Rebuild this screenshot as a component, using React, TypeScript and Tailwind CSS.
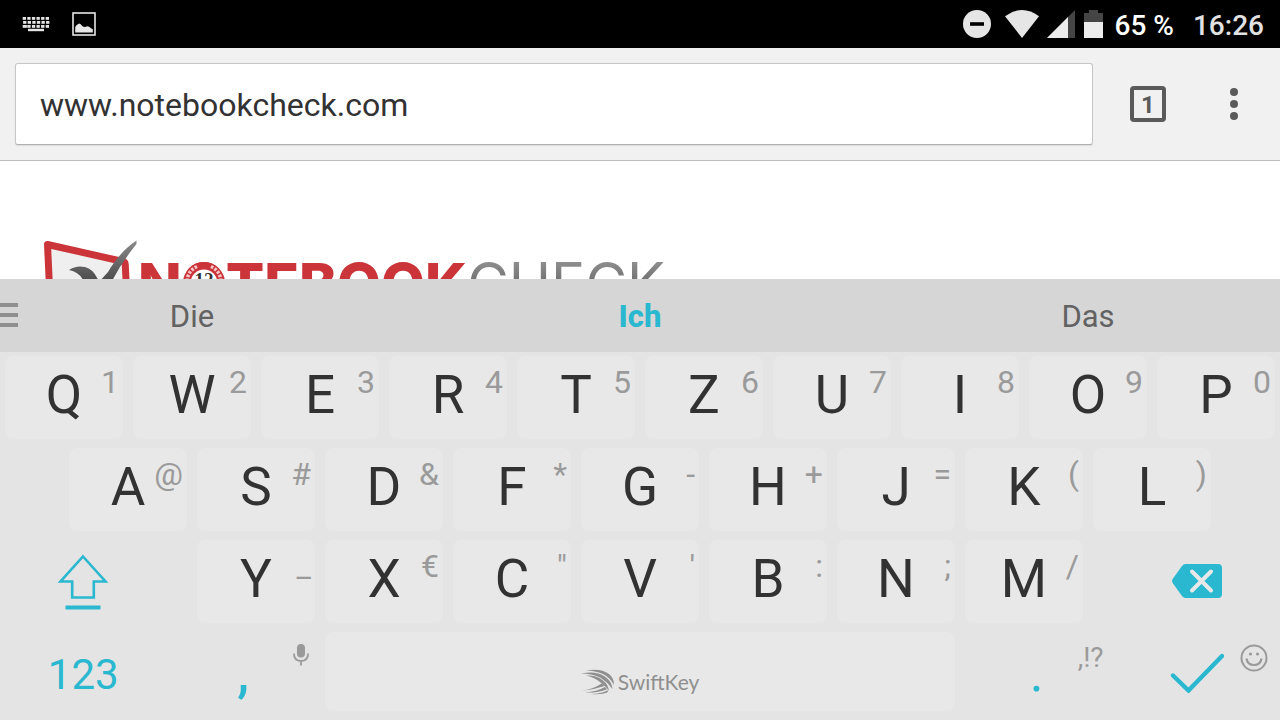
import { useState } from 'react'
import type { ReactNode } from 'react'
import { clsx } from 'clsx'

const ROW_TOP    = [['Q', '1'], ['W', '2'], ['E', '3'], ['R', '4'], ['T', '5'], ['Z', '6'], ['U', '7'], ['I', '8'], ['O', '9'], ['P', '0']]
const ROW_MIDDLE = [['A', '@'], ['S', '#'], ['D', '&'], ['F', '*'], ['G', '-'], ['H', '+'], ['J', '='], ['K', '('], ['L', ')']]
const ROW_BOTTOM = [['Y', '_'], ['X', '€'], ['C', '"'], ['V', "'"], ['B', ':'], ['N', ';'], ['M', '/']]
const WORDS      = ['Die', 'Ich', 'Das']

function Row({ children }: { children: ReactNode }) {
  return <div className="flex h-[92px] justify-center pt-1 pb-[5px]">{children}</div>
}

function LetterKey({ label, hint }: { label: string; hint: string }) {
  return (
    <div className="flex w-1/10 px-[5px]">
      <button className="relative flex flex-1 items-center justify-center rounded-lg bg-[#e8e8e8] pb-1 text-[53px] leading-none text-[#323232]">
        {label}
        <span className="absolute top-2 right-1 text-[32px] leading-9 text-[#9a9a9a]">{hint}</span>
      </button>
    </div>
  )
}

function StatusBar() {
  return (
    <header className="flex h-12 shrink-0 items-center justify-between bg-black px-4 font-medium">
      <div className="flex items-center gap-[22px] pl-1.5">
        <svg width="28" height="16" viewBox="0 0 28 16" fill="#e6e6e6" aria-label="Keyboard">
          {[1, 5, 9].map((y, r) => (
            [0, 1, 2, 3, 4, 5].map(c => (
              <rect key={`${r}-${c}`} x={0.7 + c * 4.6 + (r === 1 ? 0.4 : 0)} y={y} width={r === 2 && c === 0 ? 4.2 : 3.3} height="2.8" />
            ))
          ))}
          <rect x="6" y="12.8" width="16" height="2.4" />
        </svg>
        <svg width="24" height="24" viewBox="0 0 24 24" aria-label="Picture">
          <rect x="1" y="1" width="22" height="22" fill="none" stroke="#e6e6e6" strokeWidth="1.6" />
          <path d="M3.200 20.500v-5.500q1-2.500 4-3.500q1.500.2 3 2.500q2 1.500 3.500.8q2-1.200 4 .4q1 .8 3.100 2.100v3.200z" fill="#e6e6e6" />
        </svg>
      </div>
      <div className="flex items-center text-[28px] leading-none">
        <svg width="28" height="28" viewBox="0 0 28 28" aria-label="Do not disturb">
          <circle cx="14" cy="14" r="14" fill="#e6e6e6" />
          <rect x="7" y="12.2" width="14" height="3.6" />
        </svg>
        <svg className="ml-3.5" width="34" height="28" viewBox="0 0 34 28" aria-label="Wi-Fi">
          <path d="M0 6.200Q17-6.200 34 6.200L17 28z" fill="#e6e6e6" />
        </svg>
        <svg className="ml-2" width="28" height="28" viewBox="0 0 28 28" aria-label="Signal">
          <path d="M0 28L28 0v28z" fill="#454545" />
          <path d="M0 28L21 7v21z" fill="#ececec" />
        </svg>
        <svg className="ml-[9px]" width="19" height="28" viewBox="0 0 19 28" aria-label="Battery">
          <path d="M0 3h5V0h9v3h5v9H0z" fill="#454545" />
          <path d="M0 12h19v16H0z" fill="#ececec" />
        </svg>
        <span className="ml-3 pt-1 text-white">65 %</span>
        <span className="ml-[19px] pt-1 text-[#e2e2e2]">16:26</span>
      </div>
    </header>
  )
}

function BrowserBar() {
  const [url, setUrl] = useState('www.notebookcheck.com')

  return (
    <div className="flex shrink-0 items-center border-b border-[#bdbdbd] bg-[#f1f1f1] py-[15px] pr-7 pl-[15px]">
      <input
        aria-label="Address"
        value={url}
        onChange={e => setUrl(e.target.value)}
        className="h-[82px] min-w-0 flex-1 rounded-[3px] border border-[#c6c6c6] border-b-[#b0b0b0] bg-white px-6 pt-0.5 text-[32px] text-[#323232] shadow-[0_1px_1px_#dcdcdc] outline-none"
      />
      <button aria-label="Tabs" className="ml-[37px] flex size-9 items-center justify-center rounded-[4px] border-4 border-[#5a5a5a] pt-px text-[24px] leading-none font-bold text-[#5a5a5a]">
        1
      </button>
      <button aria-label="More options" className="ml-[50px] flex w-9 flex-col items-center gap-1">
        <span className="size-2 rounded-full bg-[#5a5a5a]" />
        <span className="size-2 rounded-full bg-[#5a5a5a]" />
        <span className="size-2 rounded-full bg-[#5a5a5a]" />
      </button>
    </div>
  )
}

function SiteLogo() {
  return (
    <div className="flex items-start pt-[79px] pl-[43px]">
      <svg width="95" height="84" viewBox="0 0 95 84" className="shrink-0" aria-hidden="true">
        <defs>
          <linearGradient id="tick" x1="0" y1="0" x2="0" y2="1">
            <stop offset="0" stopColor="#8c8c8c" />
            <stop offset="0.5" stopColor="#555555" />
            <stop offset="1" stopColor="#2e2e2e" />
          </linearGradient>
        </defs>
        <path d="M4.500 4.500L80 21.500Q82 22 82.200 24L85 76L8 80z" fill="#efefef" stroke="#cb353a" strokeWidth="7" strokeLinejoin="round" />
        <path d="M93.500 .5C82 8 72 20 65 32L56 42Q51 29 42 27Q33 25 26 30Q36 32 40 40L52 68H59Q66 38 93.500 4z" fill="url(#tick)" />
      </svg>
      <div className="flex pt-[14px] font-[Inter,sans-serif] text-[57px] leading-[60px] whitespace-nowrap">
        <span className="font-extrabold text-[#cb353a]">
          N
          <span className="relative inline-block">
            O
            <svg className="absolute top-2 left-1/2 -translate-x-1/2" width="42" height="42" viewBox="0 0 42 42" aria-hidden="true">
              <circle cx="21" cy="21" r="21" fill="#cb353a" />
              <circle cx="21" cy="21" r="13.500" fill="#ffffff" />
              <path d="M14 4.500Q3 10 4.500 22M28 4.500Q39 10 37.500 22" fill="none" stroke="#f3c9ca" strokeWidth="3.500" strokeDasharray="2.500 1.500" />
              <text x="21" y="24" textAnchor="middle" fontFamily="Liberation Serif, serif" fontSize="19" fontWeight="700" fill="#333333">12</text>
            </svg>
          </span>
          TEBOOK
        </span>
        <span className="bg-linear-to-b from-[#9a9a9a] to-[#444444] bg-clip-text text-transparent">CHECK</span>
      </div>
    </div>
  )
}

function SwiftKeyMark() {
  return (
    <svg width="34" height="26" viewBox="0 0 34 26" fill="#8f8f8f" aria-hidden="true">
      <path d="M5 1.500Q20-1 28 5Q33 9 33 16Q29 8.500 22 5Q14 1.500 5 1.500z" />
      <path d="M0 4.500Q15 1.500 23 7Q31 12 31.500 20Q27 13.500 20 9Q12 4.500 0 4.500z" />
      <path d="M5 6.500Q16 6 22 11.500Q27 15 28 22Q25 17.500 19 13Q13 8 5 6.500z" />
      <path d="M20.500 14.500L23.500 17Q12 21 0 22Q13 20 20.500 14.500z" />
      <path d="M24 18L26 20.200Q17 24 4 23.500Q16 22.500 24 18z" />
      <path d="M26.500 21.200L27 23Q21 26 10 25Q20 25 26.500 21.200z" />
    </svg>
  )
}

function Keyboard() {
  return (
    <section aria-label="Keyboard" className="shrink-0 overflow-hidden bg-[#e4e4e4]">
      {/* Word suggestions */}
      <div className="relative h-[73px] bg-[#d6d6d6]">
        <div className="-mx-8 grid h-full grid-cols-3">
          {WORDS.map(w => (
            <button
              key={w}
              className={clsx('pt-0.5 text-[31px] leading-none', w === 'Ich' ? 'font-extrabold text-[#29b8cf]' : 'text-[#626262]')}
            >
              {w}
            </button>
          ))}
        </div>
        <button aria-label="Menu" className="absolute top-6 left-0 flex flex-col gap-1.5">
          <span className="h-1 w-[18px] bg-[#8f8f8f]" />
          <span className="h-1 w-[18px] bg-[#8f8f8f]" />
          <span className="h-1 w-[18px] bg-[#8f8f8f]" />
        </button>
      </div>

      <Row>
        {ROW_TOP.map(([label, hint]) => <LetterKey key={label} label={label} hint={hint} />)}
      </Row>

      <Row>
        {ROW_MIDDLE.map(([label, hint]) => <LetterKey key={label} label={label} hint={hint} />)}
      </Row>

      <Row>
        <button aria-label="Shift" className="mr-[2%] flex w-[13%] items-center justify-center">
          <svg width="52" height="56" viewBox="0 0 52 56" fill="none" stroke="#29b8cf">
            <path d="M26 2.500L48.500 27.500H36.800V43.500H15.200V27.500H3.500z" strokeWidth="2.600" />
            <path d="M8.500 53.500h35" strokeWidth="4" />
          </svg>
        </button>
        {ROW_BOTTOM.map(([label, hint]) => <LetterKey key={label} label={label} hint={hint} />)}
        <button aria-label="Delete" className="ml-[2%] flex w-[13%] items-center justify-center pb-px">
          <svg width="50" height="34" viewBox="0 0 50 34">
            <path d="M13.500 0H46q4 0 4 4v26q0 4-4 4H13.500q-2 0-3.500-2L1 19.500Q-.8 17 1 14.500L10 2q1.500-2 3.500-2z" fill="#29b8cf" />
            <path d="M20 7.500l19 19M39 7.500l-19 19" stroke="#e8e8e8" strokeWidth="4" strokeLinecap="round" />
          </svg>
        </button>
      </Row>

      <Row>
        <button className="w-[13%] pt-0.5 text-[42px] leading-none text-[#29b8cf]">123</button>
        <button className="relative w-[12%] text-[53px] leading-none font-medium text-[#29b8cf]">
          ,
          <svg className="absolute top-3 right-[11px]" width="16" height="22" viewBox="0 0 16 22" aria-label="Voice input">
            <rect x="4" y="0" width="8" height="13.500" rx="4" fill="#9a9a9a" />
            <path d="M.9 9.500q0 7.500 7.100 7.500t7.100-7.500M8 17v4.500" fill="none" stroke="#9a9a9a" strokeWidth="1.800" />
          </svg>
        </button>
        <div className="flex w-1/2 px-[5px] pb-1">
          <button className="flex flex-1 items-center justify-center gap-[3px] rounded-lg bg-[#e8e8e8] pt-5 font-[Lato,sans-serif] text-[21px] leading-none text-[#8f8f8f]">
            <SwiftKeyMark />
            SwiftKey
          </button>
        </div>
        <button className="relative w-[12%] text-[53px] leading-none text-[#29b8cf]">
          .
          <span className="absolute top-3 right-2.5 text-[28px] leading-7 text-[#9a9a9a]">,!?</span>
        </button>
        <button aria-label="Enter" className="relative flex w-[13%] items-center justify-center pb-px">
          <svg width="54" height="40" viewBox="0 0 54 40" fill="none" stroke="#29b8cf" strokeWidth="4.400" strokeLinecap="round">
            <path d="M3 22.500L18.500 37.500L52 3" />
          </svg>
          <svg className="absolute top-3 right-3" width="28" height="28" viewBox="0 0 28 28" fill="none" stroke="#9a9a9a" strokeWidth="2" aria-label="Emoji">
            <circle cx="14" cy="14" r="12.500" />
            <path d="M6.500 14.500q1 6.500 7.500 6.500t7.500-6.500" strokeWidth="2.200" />
            <circle cx="10.500" cy="10" r="1.600" fill="#9a9a9a" stroke="none" />
            <circle cx="17.500" cy="10" r="1.600" fill="#9a9a9a" stroke="none" />
          </svg>
        </button>
      </Row>
    </section>
  )
}

export default function App() {
  return (
    <div className="flex h-screen flex-col overflow-hidden bg-white font-[Roboto,sans-serif]">
      <StatusBar />
      <BrowserBar />
      <main className="min-h-0 flex-1 overflow-hidden">
        <SiteLogo />
      </main>
      <Keyboard />
    </div>
  )
}
